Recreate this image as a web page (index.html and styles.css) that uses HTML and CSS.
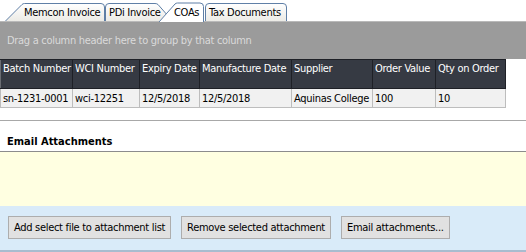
FILE: index.html
```html
<!DOCTYPE html>
<html>
<head>
<meta charset="utf-8">
<link rel="stylesheet" href="styles.css">
</head>
<body>
<div class="app">
  <div class="tabstrip">
    <div class="tab memcon">
      <svg class="tabshape" width="100" height="18" viewBox="0 0 100 18"><defs><linearGradient id="g1" x1="0" y1="0" x2="0" y2="1"><stop offset="0" stop-color="#ffffff"/><stop offset="1" stop-color="#ecebe6"/></linearGradient></defs><path d="M0.5 18 L17 1.5 Q18 0.5 19.5 0.5 H96 Q99.5 0.5 99.5 4 V18" fill="url(#g1)" stroke="#5f7fa6"/></svg>
      <span class="label">Memcon Invoice</span>
    </div>
    <div class="tab pdi">
      <svg class="tabshape" width="68" height="18" viewBox="0 0 68 18"><path d="M0.5 18 V4 Q0.5 0.5 4 0.5 H50 Q52 0.5 53 1.5 L67.5 18" fill="url(#g1)" stroke="#5f7fa6"/></svg>
      <span class="label">PDi Invoice</span>
    </div>
    <div class="tab coas">
      <svg class="tabshape" width="45" height="20" viewBox="0 0 45 20"><path d="M0 20 L16 2 Q17 1 18.5 1 H41 Q44.5 1 44.5 4.5 V20" fill="#ffffff" stroke="#5f7fa6"/></svg>
      <span class="label">COAs</span>
    </div>
    <div class="tab tax">
      <svg class="tabshape" width="82" height="18" viewBox="0 0 82 18"><path d="M0.5 18 V4 Q0.5 0.5 4 0.5 H78 Q81.5 0.5 81.5 4 V18" fill="url(#g1)" stroke="#5f7fa6"/></svg>
      <span class="label">Tax Documents</span>
    </div>
  </div>
  <div class="groupbar">Drag a column header here to group by that column</div>
  <table class="grid">
    <thead>
      <tr>
        <th class="c1">Batch Number</th>
        <th class="c2">WCI Number</th>
        <th class="c3">Expiry Date</th>
        <th class="c4">Manufacture Date</th>
        <th class="c5">Supplier</th>
        <th class="c6">Order Value</th>
        <th class="c7">Qty on Order</th>
      </tr>
    </thead>
    <tbody>
      <tr>
        <td>sn-1231-0001</td>
        <td>wci-12251</td>
        <td>12/5/2018</td>
        <td>12/5/2018</td>
        <td>Aquinas College</td>
        <td>100</td>
        <td>10</td>
      </tr>
    </tbody>
  </table>
  <div class="spacer"></div>
  <div class="section-title">Email Attachments</div>
  <div class="attach-area"></div>
  <div class="buttonbar">
    <button class="btn">Add select file to attachment list</button>
    <button class="btn">Remove selected attachment</button>
    <button class="btn">Email attachments...</button>
  </div>
</div>
</body>
</html>
```
FILE: styles.css
```css
html, body {
  margin: 0;
  padding: 0;
  background: #ffffff;
}
.app {
  width: 526px;
  height: 252px;
  overflow: hidden;
  font-family: "DejaVu Sans Condensed", "DejaVu Sans", sans-serif;
  font-stretch: condensed;
  font-size: 11px;
  letter-spacing: -0.3px;
  color: #000;
  display: flex;
  flex-direction: column;
}
.tabstrip {
  height: 21px;
  flex: none;
  display: flex;
  align-items: flex-end;
  padding-left: 5px;
  box-sizing: border-box;
}
.tab {
  position: relative;
  height: 18px;
  display: flex;
  align-items: center;
  flex: none;
}
.tabshape {
  position: absolute;
  left: 0;
  top: 0;
  display: block;
}
.label {
  position: relative;
  white-space: nowrap;
  padding-top: 1px;
}
.memcon {
  width: 100px;
  padding-left: 19px;
  box-sizing: border-box;
  z-index: 1;
}
.pdi {
  width: 68px;
  padding-left: 4px;
  box-sizing: border-box;
  z-index: 1;
  overflow: hidden;
}
.coas {
  width: 45px;
  height: 20px;
  margin-left: -14px;
  padding-left: 15px;
  box-sizing: border-box;
  z-index: 3;
  margin-bottom: -1px;
}
.coas .label {
  padding-top: 0;
}
.tax {
  width: 82px;
  padding-left: 4px;
  box-sizing: border-box;
  margin-left: 1px;
  z-index: 1;
}
.groupbar {
  height: 38px;
  flex: none;
  background: #9b9b9b;
  color: #dadada;
  padding-left: 7px;
  display: flex;
  align-items: center;
  border-top: 1px solid #b9b9b9;
  box-sizing: border-box;
}
.grid {
  flex: none;
  border-collapse: collapse;
  width: 505px;
  table-layout: fixed;
}
.grid th {
  background: #363a43;
  color: #ffffff;
  font-weight: normal;
  text-align: left;
  vertical-align: top;
  height: 29px;
  padding: 2px 0 0 2px;
  border: 1px solid #1e2026;
  border-left-color: #6a6d73;
  box-sizing: border-box;
  white-space: nowrap;
  overflow: hidden;
}
.grid td {
  background: #f1f1f1;
  height: 19px;
  padding: 0 0 0 2px;
  border: 1px solid #bdbdbd;
  box-sizing: border-box;
  white-space: nowrap;
  overflow: hidden;
}
.c1 { width: 72px; }
.c2 { width: 67px; }
.c3 { width: 60px; }
.c4 { width: 92px; }
.c5 { width: 81px; }
.c6 { width: 63px; }
.c7 { width: 70px; }
.spacer {
  height: 12px;
  flex: none;
  border-bottom: 1px solid #a8a8a8;
}
.section-title {
  font-weight: bold;
  letter-spacing: 0;
  height: 31px;
  flex: none;
  box-sizing: border-box;
  padding: 14px 0 0 7px;
  border-bottom: 1px solid #8c8c8c;
}
.attach-area {
  height: 54px;
  flex: none;
  background: #ffffe1;
}
.buttonbar {
  flex: 1;
  background: #d9ebf9;
  border-bottom: 2px solid #a9bccf;
  display: flex;
  align-items: center;
  padding: 0 0 1px 8px;
  gap: 10px;
}
.btn {
  font: inherit;
  letter-spacing: inherit;
  height: 23px;
  background: #e1e1e1;
  border: 1px solid #adadad;
  padding: 0 5px;
  color: #000;
  margin: 0;
}
```
